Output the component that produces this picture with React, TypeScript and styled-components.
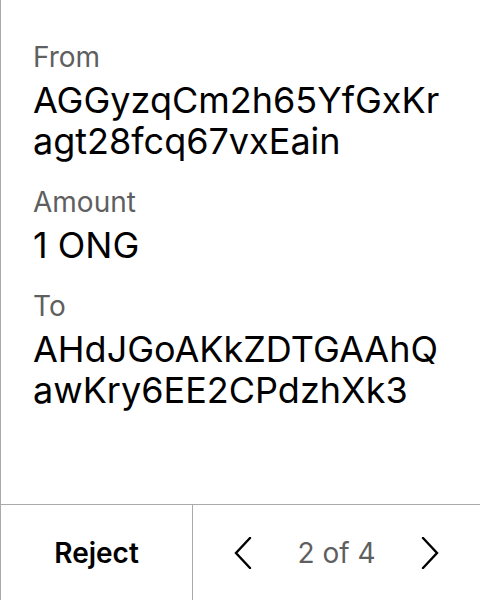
import styled, { createGlobalStyle } from "styled-components";

const GlobalStyle = createGlobalStyle`
  html, body {
    margin: 0;
    padding: 0;
    background: white;
  }
  body {
    font-family: "Inter", "Liberation Sans", sans-serif;
  }
`;

const StyledApp = styled.div`
  display: flex;
  flex-direction: column;
  height: 600px;
  width: 480px;
  box-sizing: border-box;
  border-left: 1px solid rgb(170, 170, 170);
`;

const Details = styled.div`
  flex: 1;
  display: flex;
  flex-direction: column;
  gap: 23px;
  padding: 40px 32px 0 32px;
`;

const Field = styled.div`
  display: flex;
  flex-direction: column;
  gap: 6px;
`;

const FieldLabel = styled.div`
  font-size: 28px;
  line-height: 34px;
  color: rgb(95, 95, 95);
`;

const FieldValue = styled.div`
  font-size: 36px;
  line-height: 41px;
  color: black;
`;

const Footer = styled.div`
  display: flex;
  flex-direction: row;
  height: 96px;
  box-sizing: border-box;
  border-top: 1px solid rgb(170, 170, 170);
`;

const RejectButton = styled.button`
  width: 192px;
  border: none;
  border-right: 1px solid rgb(170, 170, 170);
  background: none;
  font-family: "Inter", "Liberation Sans", sans-serif;
  font-size: 28px;
  font-weight: 600;
  color: black;
  padding: 0;
`;

const Pager = styled.div`
  flex: 1;
  display: flex;
  flex-direction: row;
  align-items: center;
  justify-content: space-between;
  padding: 0 35px;
`;

const PagerText = styled.div`
  font-size: 28px;
  color: rgb(95, 95, 95);
`;

const ArrowButton = styled.button`
  width: 30px;
  height: 40px;
  display: flex;
  align-items: center;
  justify-content: center;
  border: none;
  background: none;
  padding: 0;
`;

const Chevron = ({ dir }: { dir: "left" | "right" }) => (
  <svg width="18" height="32" viewBox="0 0 18 32" fill="none">
    <polyline
      points={dir === "left" ? "16,1 2,16 16,31" : "2,1 16,16 2,31"}
      stroke="black"
      strokeWidth="2.4"
      strokeLinecap="round"
      strokeLinejoin="miter"
    />
  </svg>
);

const fields = [
  { label: "From", lines: ["AGGyzqCm2h65YfGxKr", "agt28fcq67vxEain"] },
  { label: "Amount", lines: ["1 ONG"] },
  { label: "To", lines: ["AHdJGoAKkZDTGAAhQ", "awKry6EE2CPdzhXk3"] },
];

const App = () => {
  return (
    <StyledApp>
      <GlobalStyle />
      <Details>
        {fields.map((f) => (
          <Field key={f.label}>
            <FieldLabel>{f.label}</FieldLabel>
            <FieldValue>
              {f.lines.map((line) => (
                <div key={line}>{line}</div>
              ))}
            </FieldValue>
          </Field>
        ))}
      </Details>
      <Footer>
        <RejectButton>Reject</RejectButton>
        <Pager>
          <ArrowButton>
            <Chevron dir="left" />
          </ArrowButton>
          <PagerText>2 of 4</PagerText>
          <ArrowButton>
            <Chevron dir="right" />
          </ArrowButton>
        </Pager>
      </Footer>
    </StyledApp>
  );
};

export default App;
